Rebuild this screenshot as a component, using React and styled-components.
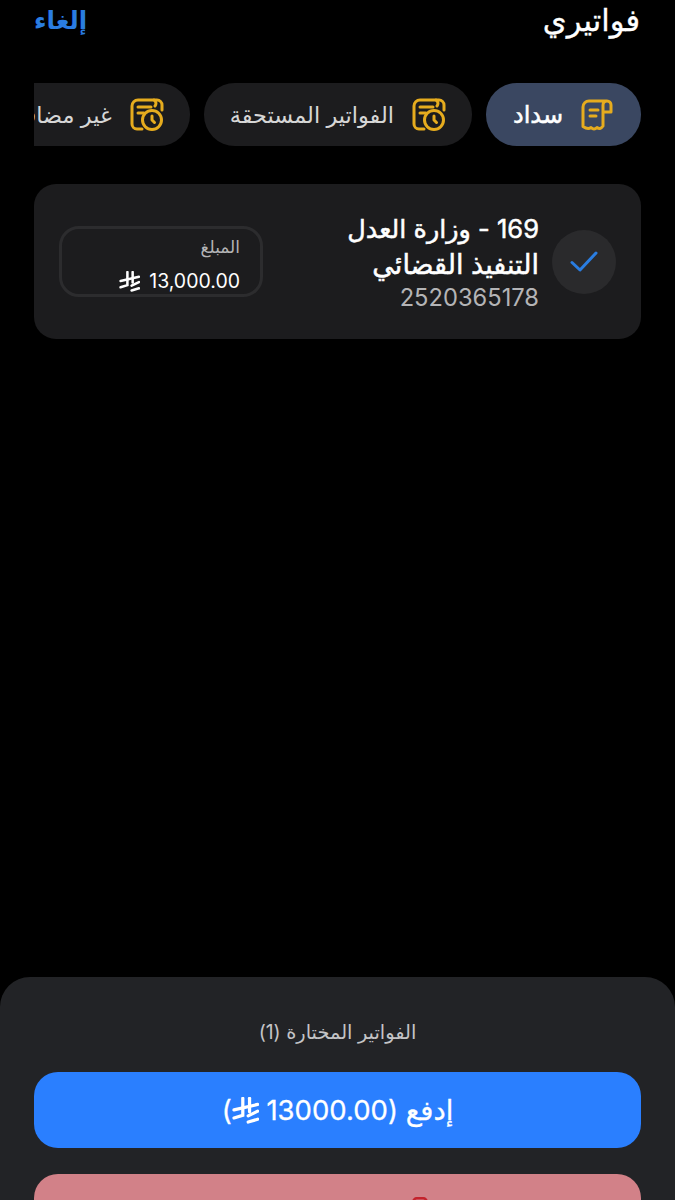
import React from "react";
import styled, { createGlobalStyle } from "styled-components";
import { Trash2 } from "lucide-react";

const GlobalStyle = createGlobalStyle`
    html, body {
        margin: 0;
        padding: 0;
        background: #000;
    }
    * {
        box-sizing: border-box;
    }
`;

function ReceiptIcon() {
    return (
        <TabSvg width="32" height="32" viewBox="0 0 32 32">
            <path d="M22 13 h8 V6 a4 4 0 0 0 -8 0 V27 c-2 3 -4 3 -6 1.500 c-2 2 -4 2 -6 0 c-2 1.500 -5 1 -8 -1 V8 a6 6 0 0 1 6 -6 H26" />
            <path d="M9 11 h8 M9 17 h6" />
        </TabSvg>
    );
}

function BillClockIcon() {
    return (
        <TabSvg width="34" height="34" viewBox="0 0 34 34">
            <path d="M12 31 H7 a5 5 0 0 1 -5 -5 V8 a6 6 0 0 1 6 -6 H27 a5 5 0 0 1 5 5 V12" />
            <path d="M24 2 a4 4 0 0 1 1 6" />
            <path d="M8 9 h13 M8 15 h6" />
            <circle cx="22" cy="22" r="9.500" />
            <path d="M22 18 v4 l2.500 2.500" />
        </TabSvg>
    );
}

function RiyalIcon({ size }) {
    return (
        <RiyalSvg width={size} height={size} viewBox="0 0 20 20">
            <path d="M8 1 V13.500 L1.500 15.500" />
            <path d="M13 1 V11" />
            <path d="M1.500 9.500 L19 5.500" />
            <path d="M12 14 L19 10.500" />
            <path d="M12 18.500 L19 16.500" />
        </RiyalSvg>
    );
}

function Tab({ active, icon, label }) {
    return (
        <TabButton $active={active}>
            {icon}
            <TabLabel $active={active}>{label}</TabLabel>
        </TabButton>
    );
}

function App() {
    return (
        <Page dir="rtl">
            <GlobalStyle />
            <Header>
                <Title>فواتيري</Title>
                <CancelLink>إلغاء</CancelLink>
            </Header>

            <Tabs>
                <Tab active icon={<ReceiptIcon />} label="سداد" />
                <Tab icon={<BillClockIcon />} label="الفواتير المستحقة" />
                <Tab icon={<BillClockIcon />} label="غير مضافة" />
            </Tabs>

            <BillCard>
                <CheckCircle>
                    <svg width="30" height="30" viewBox="0 0 30 30" fill="none" stroke="#2a7de1" strokeWidth="3" strokeLinecap="round" strokeLinejoin="round">
                        <path d="M3 15.500 L11 23 L27 6" />
                    </svg>
                </CheckCircle>
                <BillInfo>
                    <BillName>169 - وزارة العدل</BillName>
                    <BillName $large>التنفيذ القضائي</BillName>
                    <BillNumber>2520365178</BillNumber>
                </BillInfo>
                <AmountBox>
                    <AmountLabel>المبلغ</AmountLabel>
                    <AmountValue>
                        13,000.00
                        <RiyalIcon size={21} />
                    </AmountValue>
                </AmountBox>
            </BillCard>

            <Footer>
                <SelectedLabel>الفواتير المختارة (1)</SelectedLabel>
                <PayButton>
                    إدفع (13000.00 <RiyalIcon size={27} />)
                </PayButton>
                <DeleteButton>
                    <Trash2 size={40} strokeWidth={1.5} color="#c4222c" />
                </DeleteButton>
            </Footer>
        </Page>
    );
}

export default App;

const fontStack = `Inter, "Noto Sans", "DejaVu Sans", sans-serif`;

const Page = styled.div`
    position: relative;
    display: flex;
    flex-direction: column;
    width: 675px;
    height: 1200px;
    overflow: hidden;
    background: #000;
    font-family: ${fontStack};
    color: #fff;
`;

const Header = styled.header`
    display: flex;
    justify-content: space-between;
    align-items: flex-start;
    height: 83px;
    padding: 0 35px 0 34px;
`;

const Title = styled.h1`
    margin: 0;
    font-size: 30.5px;
    font-weight: 400;
    line-height: 40px;
    -webkit-text-stroke: 0.3px #fff;
`;

const CancelLink = styled.a`
    font-size: 24.500px;
    font-weight: 700;
    line-height: 40px;
    color: #2a7de1;
`;

const Tabs = styled.nav`
    display: flex;
    gap: 14px;
    height: 63px;
    margin: 0 34px;
    overflow: hidden;
`;

const TabButton = styled.div`
    display: flex;
    flex-shrink: 0;
    align-items: center;
    gap: 18px;
    height: 63px;
    padding: ${(props) => (props.$active ? "0 28px 0 27px" : "0 26px")};
    border-radius: 31px;
    background: ${(props) => (props.$active ? "#3a4761" : "#1c1c1e")};
`;

const TabLabel = styled.span`
    font-size: ${(props) => (props.$active ? "24px" : "22.400px")};
    font-weight: 400;
    white-space: nowrap;
    color: ${(props) => (props.$active ? "#fff" : "#d6d6d6")};
    -webkit-text-stroke: ${(props) => (props.$active ? "0.5px #fff" : "0")};
`;

const TabSvg = styled.svg`
    flex-shrink: 0;
    fill: none;
    stroke: #e6ac1e;
    stroke-width: 3;
    stroke-linecap: round;
    stroke-linejoin: round;
`;

const RiyalSvg = styled.svg`
    display: inline-block;
    vertical-align: -4px;
    fill: none;
    stroke: currentColor;
    stroke-width: 2.400;
    stroke-linecap: round;
`;

const BillCard = styled.section`
    display: flex;
    align-items: center;
    height: 155px;
    margin: 38px 34px 0;
    padding: 0 25px 0 25px;
    border-radius: 22px;
    background: #1c1c1e;
`;

const CheckCircle = styled.div`
    display: flex;
    flex-shrink: 0;
    align-items: center;
    justify-content: center;
    width: 64px;
    height: 64px;
    border-radius: 50%;
    background: #2a2a2c;
`;

const BillInfo = styled.div`
    flex: 1;
    padding-right: 13px;
`;

const BillName = styled.div`
    font-size: ${(props) => (props.$large ? "27px" : "25.500px")};
    font-weight: 400;
    line-height: 36px;
    -webkit-text-stroke: 0.5px #fff;
`;

const BillNumber = styled.div`
    font-size: 23.700px;
    line-height: 30px;
    color: #b4b4b6;
`;

const AmountBox = styled.div`
    width: 204px;
    height: 71px;
    padding: 6px 20px 0 0;
    border: 3px solid #2c2c2e;
    border-radius: 20px;
`;

const AmountLabel = styled.div`
    font-size: 17px;
    line-height: 24px;
    color: #b4b4b6;
`;

const AmountValue = styled.div`
    display: flex;
    align-items: center;
    gap: 9px;
    margin-top: 7px;
    font-size: 19.500px;
    line-height: 30px;
`;

const Footer = styled.footer`
    display: flex;
    flex-direction: column;
    flex-shrink: 0;
    gap: 26px;
    height: 223px;
    margin-top: auto;
    padding: 42px 34px 0;
    border-radius: 30px 30px 0 0;
    background: #222326;
`;

const SelectedLabel = styled.div`
    height: 27px;
    font-size: 19.400px;
    line-height: 27px;
    text-align: center;
    color: #c4c4c6;
`;

const PayButton = styled.button`
    flex-shrink: 0;
    height: 76px;
    border: 0;
    border-radius: 24px;
    background: #2a7fff;
    font-family: ${fontStack};
    font-size: 27.500px;
    font-weight: 400;
    color: #fff;
    -webkit-text-stroke: 0.3px #fff;
`;

const DeleteButton = styled.button`
    display: flex;
    flex-shrink: 0;
    justify-content: center;
    height: 76px;
    padding: 21px 0 0 165px;
    border: 0;
    border-radius: 24px;
    background: #d28188;
`;
